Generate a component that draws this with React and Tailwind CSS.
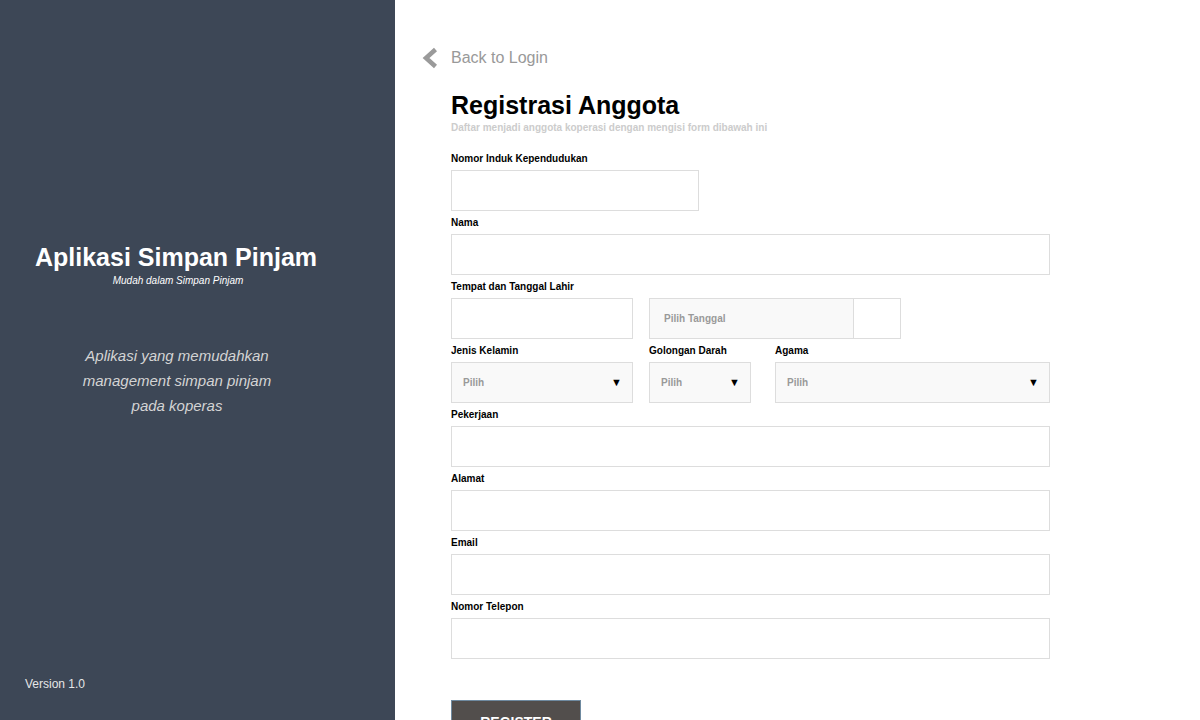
import React, { useState } from "react";

const Label = ({ children }) => (
  <label className="block text-[10px] font-bold leading-[12px] text-black mb-[5px]">{children}</label>
);

const Select = ({ className }) => (
  <div className={`relative h-[41px] border border-[#dddddd] bg-[#f9f9f9] ${className}`}>
    <span className="absolute left-[11px] top-[12px] text-[10px] font-bold text-[#999999]">Pilih</span>
    <span className="absolute right-[10px] top-[11px] text-[11px] text-black">▼</span>
  </div>
);

const App = () => {
  const [formData, setFormData] = useState({
    nik: "",
    nama: "",
    tempat: "",
    pekerjaan: "",
    alamat: "",
    email: "",
    telepon: "",
  });

  const handleChange = (e) => {
    setFormData({ ...formData, [e.target.name]: e.target.value });
  };

  const inputClass = "block h-[41px] border border-[#dddddd] bg-white px-3 text-sm outline-none";

  return (
    <div className="flex min-h-screen bg-white font-['Liberation_Sans',Arial,sans-serif]">
      {/* Sidebar */}
      <div className="relative h-[720px] w-[395px] shrink-0 bg-[#3d4756]">
        <div className="w-[352px] pt-[242px] text-center">
          <h1 className="text-[25px] font-bold leading-[30px] text-white">Aplikasi Simpan Pinjam</h1>
          <p className="mt-[3px] pl-[4px] text-[10px] italic leading-[12px] text-white">Mudah dalam Simpan Pinjam</p>
          <p className="mt-[56px] pl-[2px] text-[15px] italic leading-[25px] text-[#d4d4d4]">
            Aplikasi yang memudahkan
            <br />
            management simpan pinjam
            <br />
            pada koperas
          </p>
        </div>
        <div className="absolute bottom-[29px] left-[25px] text-[12px] leading-[14px] text-[#e6e6e6]">Version 1.0</div>
      </div>

      {/* Form */}
      <div className="flex-1 pl-[27px] pt-[47px]">
        <a href="#" className="flex h-[22px] items-center gap-[13px] text-[16px] leading-[22px] text-[#999999]">
          <svg width="16" height="22" viewBox="0 0 16 22">
            <polyline points="13.5,2.5 4,11 13.5,19.5" fill="none" stroke="#9a9a9a" strokeWidth="4.5" />
          </svg>
          Back to Login
        </a>

        <div className="ml-[29px] mt-[21px] w-[599px]">
          <h2 className="text-[25px] font-bold leading-[30px] text-black">Registrasi Anggota</h2>
          <p className="mt-[2px] text-[10px] font-bold leading-[12px] text-[#cccccc]">
            Daftar menjadi anggota koperasi dengan mengisi form dibawah ini
          </p>

          <form className="mt-[19px]">
            <Label>Nomor Induk Kependudukan</Label>
            <input name="nik" value={formData.nik} onChange={handleChange} className={`${inputClass} w-[248px]`} />

            <div className="mt-[6px]">
              <Label>Nama</Label>
              <input name="nama" value={formData.nama} onChange={handleChange} className={`${inputClass} w-full`} />
            </div>

            <div className="mt-[6px]">
              <Label>Tempat dan Tanggal Lahir</Label>
              <div className="flex gap-[16px]">
                <input name="tempat" value={formData.tempat} onChange={handleChange} className={`${inputClass} w-[182px]`} />
                <div className="flex h-[41px]">
                  <div className="flex w-[205px] items-center border border-[#dddddd] bg-[#f9f9f9] pl-[14px] text-[10px] font-bold text-[#999999]">
                    Pilih Tanggal
                  </div>
                  <div className="w-[47px] border border-l-0 border-[#dddddd] bg-white" />
                </div>
              </div>
            </div>

            <div className="mt-[6px] flex">
              <div className="w-[182px]">
                <Label>Jenis Kelamin</Label>
                <Select className="w-[182px]" />
              </div>
              <div className="ml-[16px] w-[102px]">
                <Label>Golongan Darah</Label>
                <Select className="w-[102px]" />
              </div>
              <div className="ml-[24px] w-[275px]">
                <Label>Agama</Label>
                <Select className="w-[275px]" />
              </div>
            </div>

            <div className="mt-[6px]">
              <Label>Pekerjaan</Label>
              <input name="pekerjaan" value={formData.pekerjaan} onChange={handleChange} className={`${inputClass} w-full`} />
            </div>
            <div className="mt-[6px]">
              <Label>Alamat</Label>
              <input name="alamat" value={formData.alamat} onChange={handleChange} className={`${inputClass} w-full`} />
            </div>
            <div className="mt-[6px]">
              <Label>Email</Label>
              <input name="email" value={formData.email} onChange={handleChange} className={`${inputClass} w-full`} />
            </div>
            <div className="mt-[6px]">
              <Label>Nomor Telepon</Label>
              <input name="telepon" value={formData.telepon} onChange={handleChange} className={`${inputClass} w-full`} />
            </div>

            <button
              type="button"
              className="mt-[41px] h-[44px] w-[130px] border border-[#6f8aa0] bg-[#524e4c] text-[14px] font-bold text-white"
            >
              REGISTER
            </button>
          </form>
        </div>
      </div>
    </div>
  );
};

export default App;
